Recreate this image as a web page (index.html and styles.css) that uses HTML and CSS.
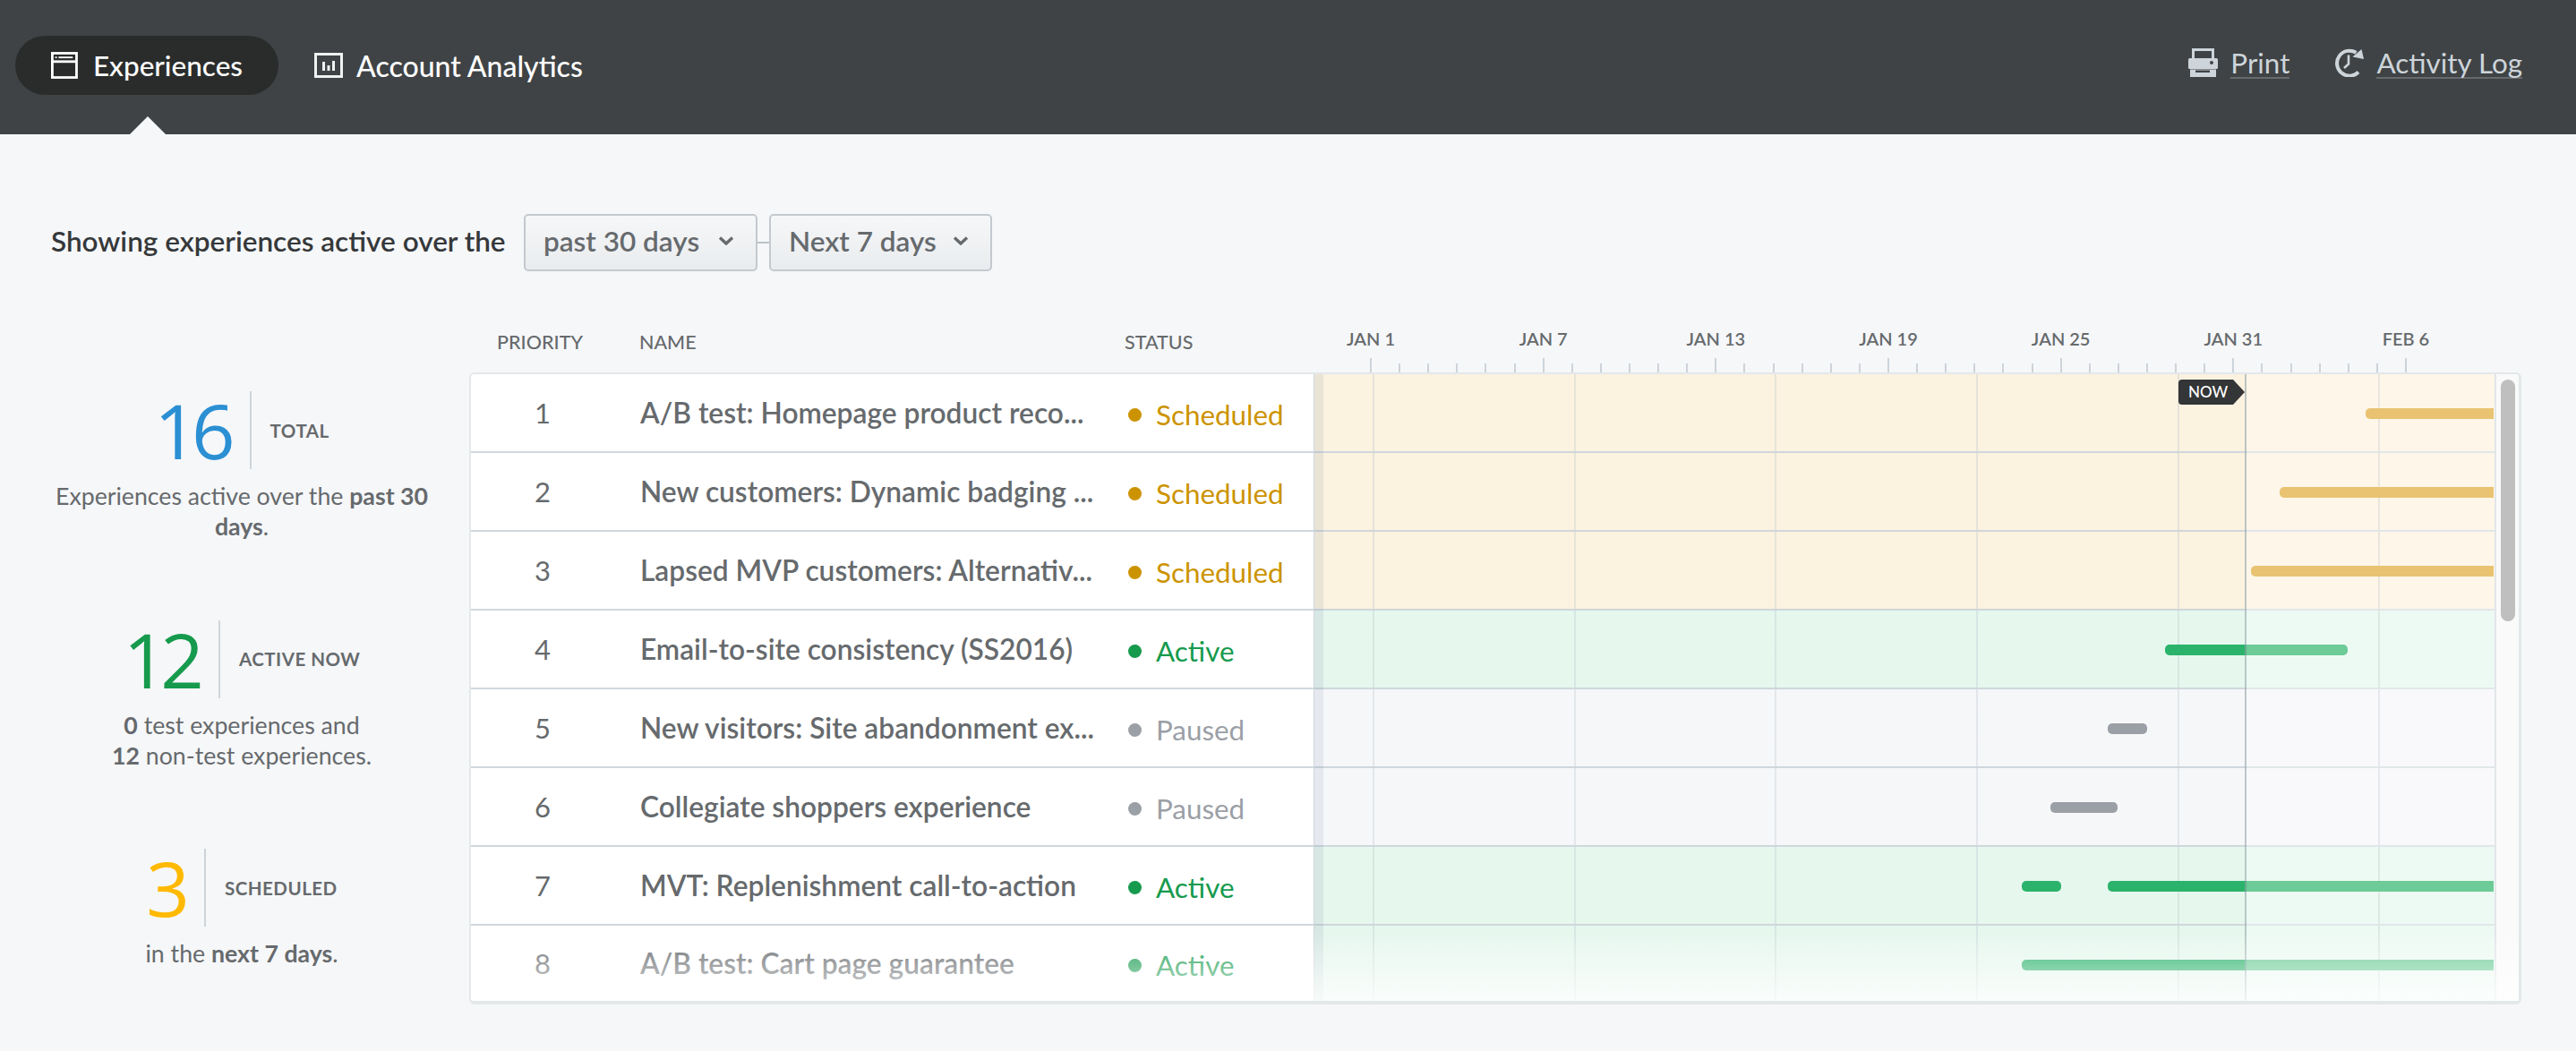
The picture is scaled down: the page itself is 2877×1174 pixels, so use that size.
FILE: index.html
```html
<!DOCTYPE html>
<html lang="en">
<head>
<meta charset="utf-8">
<title>Experiences</title>
<link rel="stylesheet" href="styles.css">
</head>
<body>
<header class="topbar">
  <nav class="nav-main">
    <a class="nav-item is-active">
      <svg class="nav-icon" width="32" height="32" viewBox="0 0 32 32"><rect x="1.5" y="1.5" width="29" height="29" fill="none" stroke="#fff" stroke-width="3"/><rect x="2" y="10" width="28" height="3" fill="#fff"/><rect x="5" y="5.5" width="2" height="2" fill="#fff"/><rect x="9" y="5.5" width="17" height="2" fill="#fff"/></svg>
      <span>Experiences</span>
    </a>
    <a class="nav-item">
      <svg class="nav-icon" width="32" height="28" viewBox="0 0 32 28"><rect x="1.5" y="1.5" width="29" height="25" fill="none" stroke="#f0f1f1" stroke-width="3"/><rect x="9" y="10" width="3" height="10" fill="#f0f1f1"/><rect x="14.5" y="14" width="3" height="6" fill="#f0f1f1"/><rect x="20" y="9" width="3" height="11" fill="#f0f1f1"/></svg>
      <span>Account Analytics</span>
    </a>
  </nav>
  <div class="nav-tools">
    <a class="tool">
      <svg width="33" height="32" viewBox="0 0 33 32"><path fill="#cdd5db" d="M4 11V0h25v11h-3V3H7v8z"/><rect y="11" width="33" height="12" rx="1.5" fill="#cdd5db"/><circle cx="26" cy="16" r="2" fill="#3f4345"/><path fill="#cdd5db" fill-rule="evenodd" d="M2 23.500h29V32H2zM8 24.500v2.500h16v-2.500z"/></svg>
      <span class="tool-label">Print</span>
    </a>
    <a class="tool">
      <svg width="33" height="32" viewBox="0 0 33 32"><path fill="none" stroke="#cdd5db" stroke-width="4" d="M27 26.500A14 14 0 1 1 24.500 4.800"/><path fill="#cdd5db" d="M33 12 20.500 9.500 30.500 1z"/><path fill="none" stroke="#cdd5db" stroke-width="2.600" d="M16 7.500V17.500L11 22"/></svg>
      <span class="tool-label">Activity Log</span>
    </a>
  </div>
</header>

<main class="page">
  <section class="filter">
    <span class="filter-label">Showing experiences active over the</span>
    <button class="select select-past">past 30 days<svg width="18" height="10" viewBox="0 0 18 10"><path d="M2 1.500 9 8l7-6.500" fill="none" stroke="#666a6d" stroke-width="3.400"/></svg></button>
    <span class="select-link"></span>
    <button class="select select-next">Next 7 days<svg width="18" height="10" viewBox="0 0 18 10"><path d="M2 1.500 9 8l7-6.500" fill="none" stroke="#666a6d" stroke-width="3.400"/></svg></button>
  </section>

  <section class="content">
    <aside class="stats">
      <div class="stat">
        <div class="stat-head"><span class="stat-num num-blue">16</span><span class="stat-label">TOTAL</span></div>
        <p class="stat-text">Experiences active over the <b>past 30</b> <b>days</b>.</p>
      </div>
      <div class="stat">
        <div class="stat-head"><span class="stat-num num-green">12</span><span class="stat-label">ACTIVE NOW</span></div>
        <p class="stat-text"><b>0</b> test experiences and<br><b>12</b> non-test experiences.</p>
      </div>
      <div class="stat">
        <div class="stat-head"><span class="stat-num num-yellow">3</span><span class="stat-label">SCHEDULED</span></div>
        <p class="stat-text">in the <b>next 7 days</b>.</p>
      </div>
    </aside>

    <div class="table">
      <div class="table-head">
        <div class="th th-num">PRIORITY</div>
        <div class="th th-name">NAME</div>
        <div class="th th-status">STATUS</div>
        <div class="axis">
          <div class="axis-labels">
            <span>JAN 1</span><span>JAN 7</span><span>JAN 13</span><span>JAN 19</span><span>JAN 25</span><span>JAN 31</span><span>FEB 6</span>
          </div>
          <div class="axis-ticks"></div>
        </div>
      </div>

      <div class="card">
        <div class="rows">
          <div class="row row-scheduled">
            <div class="cell-num">1</div>
            <div class="cell-name">A/B test: Homepage product reco...</div>
            <div class="cell-status"><i class="dot"></i>Scheduled</div>
            <div class="cell-time"><div class="bar bar-open" style="left:1175px;width:143px"></div></div>
          </div>
          <div class="row row-scheduled">
            <div class="cell-num">2</div>
            <div class="cell-name">New customers: Dynamic badging ...</div>
            <div class="cell-status"><i class="dot"></i>Scheduled</div>
            <div class="cell-time"><div class="bar bar-open" style="left:1079px;width:239px"></div></div>
          </div>
          <div class="row row-scheduled">
            <div class="cell-num">3</div>
            <div class="cell-name">Lapsed MVP customers: Alternativ...</div>
            <div class="cell-status"><i class="dot"></i>Scheduled</div>
            <div class="cell-time"><div class="bar bar-open" style="left:1047px;width:271px"></div></div>
          </div>
          <div class="row row-active">
            <div class="cell-num">4</div>
            <div class="cell-name">Email-to-site consistency (SS2016)</div>
            <div class="cell-status"><i class="dot"></i>Active</div>
            <div class="cell-time"><div class="bar" style="left:951px;width:204px;--split:89px"></div></div>
          </div>
          <div class="row row-paused">
            <div class="cell-num">5</div>
            <div class="cell-name">New visitors: Site abandonment ex...</div>
            <div class="cell-status"><i class="dot"></i>Paused</div>
            <div class="cell-time"><div class="bar" style="left:887px;width:44px"></div></div>
          </div>
          <div class="row row-paused">
            <div class="cell-num">6</div>
            <div class="cell-name">Collegiate shoppers experience</div>
            <div class="cell-status"><i class="dot"></i>Paused</div>
            <div class="cell-time"><div class="bar" style="left:823px;width:75px"></div></div>
          </div>
          <div class="row row-active">
            <div class="cell-num">7</div>
            <div class="cell-name">MVT: Replenishment call-to-action</div>
            <div class="cell-status"><i class="dot"></i>Active</div>
            <div class="cell-time"><div class="bar" style="left:791px;width:44px;--split:44px"></div><div class="bar bar-open" style="left:887px;width:431px;--split:153px"></div></div>
          </div>
          <div class="row row-active row-last">
            <div class="cell-num">8</div>
            <div class="cell-name">A/B test: Cart page guarantee</div>
            <div class="cell-status"><i class="dot"></i>Active</div>
            <div class="cell-time"><div class="bar bar-open" style="left:791px;width:527px;--split:249px"></div></div>
          </div>
          <div class="now-line"></div>
          <div class="now-badge">NOW</div>
        </div>
        <div class="scrollbar"><div class="thumb"></div></div>
        <div class="fade"></div>
      </div>
    </div>
  </section>
</main>
</body>
</html>
```
FILE: styles.css
```css
* { box-sizing: border-box; }
html, body { margin: 0; padding: 0; }
body {
  background: #f6f7f9;
  font-family: "Lato", "Liberation Sans", sans-serif;
  color: #666a6d;
  width: 2877px;
  height: 1174px;
  overflow: hidden;
}

/* top bar */
.topbar {
  height: 150px;
  background: #3f4345;
  display: flex;
  justify-content: space-between;
  position: relative;
}
.nav-main {
  display: flex;
  align-items: flex-start;
  padding: 40px 0 0 17px;
}
.nav-item {
  height: 66px;
  display: flex;
  align-items: center;
  gap: 15px;
  padding: 0 40px;
  border-radius: 33px;
  color: #fff;
  font-size: 32px;
  font-weight: 500;
  position: relative;
}
.nav-item.is-active { background: #2a2c2c; width: 294px; gap: 17px; }
.nav-item.is-active span { font-size: 31.500px; }
.nav-item.is-active::after {
  content: "";
  position: absolute;
  left: 128px;
  top: 90px;
  border-left: 20px solid transparent;
  border-right: 20px solid transparent;
  border-bottom: 20px solid #f6f7f9;
}
.nav-tools {
  display: flex;
  gap: 50px;
  padding: 54px 60px 0 0;
  align-items: flex-start;
}
.tool { display: flex; gap: 14px; align-items: flex-start; color: #cdd5db; }
.tool-label {
  font-size: 31.400px;
  line-height: 32px;
  height: 34px;
  font-weight: 400;
  border-bottom: 2px solid #666a6d;
}

/* filter */
.page { padding: 0 61px 0 40px; }
.filter {
  display: flex;
  align-items: center;
  height: 64px;
  margin-top: 89px;
  padding-left: 17px;
}
.filter-label {
  font-size: 31.500px;
  line-height: 60px;
  height: 64px;
  font-weight: 600;
  color: #35383a;
  width: 528px;
  white-space: nowrap;
}
.select {
  height: 64px;
  border: 2px solid #c3c9ce;
  border-radius: 5px;
  background: linear-gradient(#f6f7f9, #e9ecee);
  font: 600 31.500px/56px "Lato", "Liberation Sans", sans-serif;
  color: #666a6d;
  display: flex;
  align-items: center;
  justify-content: space-between;
  padding: 0 24px 4px 20px;
}
.select-past { width: 261px; }
.select-next { width: 249px; }
.select-link { width: 13px; height: 2px; background: #bcc3c8; }

/* layout */
.content { display: flex; gap: 24px; margin-top: 57px; }

/* stats */
.stats {
  width: 460px;
  padding-top: 77px;
  display: grid;
  grid-auto-rows: 255.5px;
}
.stat-head { display: flex; justify-content: center; align-items: center; height: 87px; }
.stat-num {
  font-family: "Open Sans", sans-serif;
  font-weight: 400;
  font-size: 85px;
  letter-spacing: -7px;
  line-height: 87px;
  height: 87px;
  padding-right: 23px;
  border-right: 2px solid #cdd5da;
  margin-right: 21px;
}
.num-blue { color: #2b8fd3; }
.num-green { color: #169a4d; }
.num-yellow { color: #ffb900; }
.stat-label { font-size: 20.500px; font-weight: 700; letter-spacing: .5px; color: #666a6d; }
.stat-text {
  margin: 13px 0 0;
  text-align: center;
  font-size: 26.700px;
  line-height: 34px;
  color: #666a6d;
}
.stat-text b { font-weight: 700; }

/* table head */
.table { flex: 1; }
.table-head { display: flex; height: 56px; padding-left: 2px; color: #666a6d; }
.th { font-size: 21.500px; font-weight: 500; line-height: 24px; padding-top: 10px; }
.th-num { width: 158px; text-align: center; padding-right: 4px; }
.th-name { width: 572px; padding-left: 30px; }
.th-status { width: 178.7px; }
.axis { flex: 1; }
.axis-labels { display: flex; padding-top: 6px; }
.axis-labels span {
  width: 192.67px;
  text-align: center;
  font-size: 20px;
  font-weight: 600;
  line-height: 24px;
}
.axis-ticks {
  margin: 10px 0 0 95.3px;
  width: 1158px;
  height: 16px;
  background:
    repeating-linear-gradient(to right, #ccd4da 0, #ccd4da 2px, transparent 2px, transparent 192.67px),
    repeating-linear-gradient(to right, #ccd4da 0, #ccd4da 2px, transparent 2px, transparent 32.11px) bottom / 100% 10px no-repeat;
}

/* card */
.card {
  position: relative;
  height: 706px;
  display: flex;
  background: #fff;
  border: solid #e3e8ea;
  border-width: 2px 3px 4px 2px;
  border-radius: 6px;
  overflow: hidden;
}
.rows { position: relative; width: 2260px; height: 700px; overflow: hidden; }
.row { display: flex; height: 88px; color: #666a6d; }
.row-last { height: 84px; }
.cell-num, .cell-name, .cell-status {
  display: flex;
  align-items: center;
  border-bottom: 2px solid #d0d8dd;
  white-space: nowrap;
}
.row-last .cell-num, .row-last .cell-name, .row-last .cell-status { border-bottom: 0; }
.cell-num { width: 158px; padding-left: 2px; justify-content: center; font-size: 31px; font-weight: 400; }
.cell-name { width: 537px; padding-left: 31px; font-size: 31.700px; font-weight: 600; }
.cell-status { width: 246px; padding: 4px 0 0 39px; font-size: 31.400px; font-weight: 400; }
.dot { width: 15px; height: 15px; border-radius: 50%; margin: 0 16px 0 0; background: currentColor; }
.row-scheduled .cell-status { color: #cc9300; }
.row-active .cell-status { color: #169a4d; }
.row-paused .cell-status { color: #9b9fa6; }

.cell-time {
  position: relative;
  width: 1319px;
  background:
    linear-gradient(to right, #cfd7dc 1040px, #e1e6e9 1040px) bottom / 100% 2px no-repeat,
    repeating-linear-gradient(to right, transparent 0, transparent 66px, rgba(170,185,195,.26) 66px, rgba(170,185,195,.26) 68px, transparent 68px, transparent 224.7px),
    linear-gradient(to right, var(--past) 1040px, var(--future) 1040px);
}
.row-last .cell-time { background-size: 100% 0, auto, auto; }
.cell-time::before {
  content: "";
  position: absolute;
  left: 0;
  top: 0;
  bottom: 0;
  width: 10px;
  background: rgba(40,70,110,.08);
  border-left: 1px solid #cfd7dc;
}
.row-scheduled { --past: #fbf2e0; --future: #fef6e9; --bar: #e9c372; --bar2: #e9c372; }
.row-active { --past: #e6f7ee; --future: #edfaf3; --bar: #2bb36b; --bar2: #6ccb96; }
.row-paused { --past: #f6f7f9; --future: #f9f9fb; --bar: #9b9fa6; --bar2: #9b9fa6; }

.bar {
  position: absolute;
  top: 38px;
  height: 12px;
  border-radius: 5px;
  background: linear-gradient(to right, var(--bar) var(--split, 100%), var(--bar2) var(--split, 100%));
}
.bar-open { border-radius: 5px 0 0 5px; }

.now-line {
  position: absolute;
  top: 0;
  bottom: 0;
  left: 1981px;
  width: 2px;
  background: rgba(90,115,125,.38);
}
.now-badge {
  position: absolute;
  left: 1907px;
  top: 6px;
  width: 74px;
  height: 28px;
  padding-left: 11px;
  background: #333537;
  color: #fff;
  font-size: 17px;
  font-weight: 500;
  line-height: 28px;
  border-radius: 4px 0 0 4px;
  clip-path: polygon(0 0, 61px 0, 74px 50%, 61px 100%, 0 100%);
}

.scrollbar {
  width: 27px;
  background: #fafafa;
  border-left: 2px solid #e2e6e9;
  padding: 6px 0 0 5px;
}
.thumb { width: 16px; height: 270px; border-radius: 8px; background: #bfbfbf; }

.fade {
  position: absolute;
  left: 0;
  right: 0;
  bottom: 0;
  height: 78px;
  background: linear-gradient(rgba(255,255,255,0), rgba(255,255,255,.8));
}
```
